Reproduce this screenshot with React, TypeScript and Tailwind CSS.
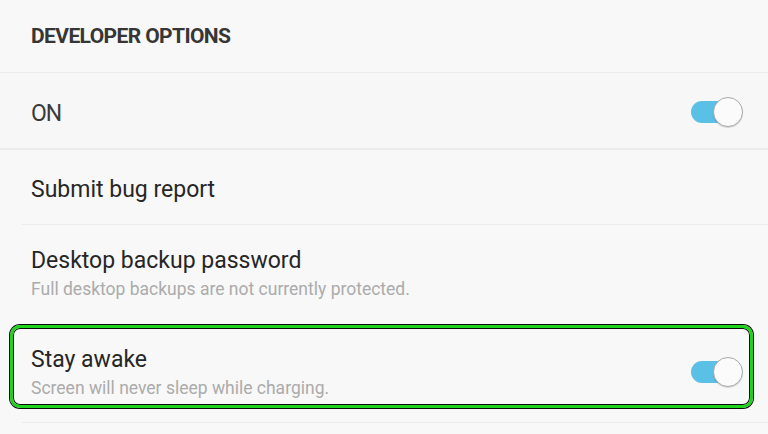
import React from "react";

function Toggle({ className = "" }: { className?: string }) {
  return (
    <div className={"relative w-[52px] h-[30px] shrink-0 " + className}>
      <div className="absolute left-0 top-[4px] w-[44px] h-[22px] rounded-full bg-[#5bc0e5]" />
      <div className="absolute right-0 top-0 w-[30px] h-[30px] rounded-full bg-[#fbfbfb] border border-[#a9a9a9] shadow-[0_1px_1px_rgba(0,0,0,0.15)]" />
    </div>
  );
}

export default function App() {
  return (
    <div
      className="w-[768px] h-[434px] overflow-hidden bg-[#f8f8f8] flex flex-col"
      style={{ fontFamily: "Roboto, 'Noto Sans', sans-serif" }}
    >
      <div className="h-[73px] shrink-0 flex items-center pl-[31px] border-b border-[#ececec]">
        <span className="text-[21px] font-bold text-[#363636] tracking-[-0.6px] leading-none">
          DEVELOPER OPTIONS
        </span>
      </div>
      <div className="h-[77px] shrink-0 flex items-center justify-between pl-[31px] pr-[25px] pt-[3px] bg-[#f7f7f7] border-b-2 border-[#ebebeb]">
        <span className="text-[23px] text-[#3a3a3a] leading-none tracking-[-1px] mt-[2px]">ON</span>
        <Toggle />
      </div>
      <div className="h-[74px] shrink-0 flex items-center pl-[31px] pt-[4px]">
        <span className="text-[23px] text-[#262626] leading-none">Submit bug report</span>
      </div>
      <div className="ml-[22px] h-px shrink-0 bg-[#ececec]" />
      <div className="h-[100px] shrink-0 flex flex-col pl-[31px] pt-[23px]">
        <span className="text-[23px] text-[#262626] leading-[26px]">Desktop backup password</span>
        <span className="text-[17.5px] text-[#ababab] leading-[22px] mt-[4px]">
          Full desktop backups are not currently protected.
        </span>
      </div>
      <div className="ml-[10px] mr-[15px] h-[83px] shrink-0 rounded-[10px] border-[3px] border-[#1ed21e] shadow-[0_0_0_1px_#0a0a0a,inset_0_0_0_1px_#0a0a0a] flex items-start justify-between pl-[18px] pr-[7px] pt-[19px]">
        <div className="flex flex-col">
          <span className="text-[23px] text-[#262626] leading-[26px]">Stay awake</span>
          <span className="text-[17.5px] text-[#ababab] leading-[22px] mt-[4px]">
            Screen will never sleep while charging.
          </span>
        </div>
        <Toggle className="mt-[10px]" />
      </div>
      <div className="mt-[14px] ml-[22px] h-px shrink-0 bg-[#ececec]" />
    </div>
  );
}
